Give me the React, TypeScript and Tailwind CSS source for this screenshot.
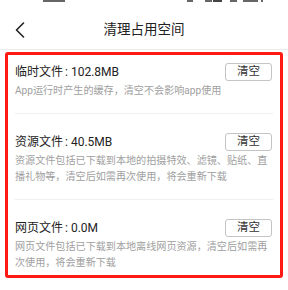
import React from "react";

const font = "font-['Roboto','Noto_Sans_CJK_SC',sans-serif]";

type Item = { name: string; size: string; desc: string };

const items: Item[] = [
  { name: "临时文件", size: "102.8MB", desc: "App运行时产生的缓存，清空不会影响app使用" },
  {
    name: "资源文件",
    size: "40.5MB",
    desc: "资源文件包括已下载到本地的拍摄特效、滤镜、贴纸、直播礼物等，清空后如需再次使用，将会重新下载",
  },
  {
    name: "网页文件",
    size: "0.0M",
    desc: "网页文件包括已下载到本地离线网页资源，清空后如需再次使用，将会重新下载",
  },
];

export default function App() {
  return (
    <div className={`w-[288px] h-[290px] bg-white overflow-hidden ${font}`}>
      {/* header */}
      <div className="h-[50px] border-b border-[#ececec]">
        <div className="h-[4px] flex items-start pl-[43px]">
          <span className="w-[22px] h-[2px] bg-[#666]" />
          <span className="ml-[122px] w-[6px] h-[2px] bg-[#666]" />
          <span className="ml-[12px] w-[7px] h-[2px] bg-[#666]" />
          <span className="ml-[1px] w-[9px] h-[2px] bg-[#444]" />
          <span className="ml-[8px] w-[7px] h-[2px] bg-[#666]" />
          <span className="ml-[6px] w-[15px] h-[2px] bg-[#666]" />
          <span className="ml-[3px] w-[2px] h-[2px] bg-[#666]" />
        </div>
        <div className="h-[45px] pt-[6px] px-[14px] grid grid-cols-[40px_1fr_40px] items-center">
          <svg
            width="12"
            height="16"
            viewBox="0 0 12 16"
            fill="none"
            stroke="#222"
            strokeWidth="1.6"
            strokeLinecap="round"
            strokeLinejoin="round"
          >
            <path d="M9.5 1 L2.5 8 L9.5 15" />
          </svg>
          <span className="text-center text-[13.5px] text-[#222] leading-none">清理占用空间</span>
          <span />
        </div>
      </div>

      {/* list */}
      <div className="mt-[2px] mx-[5px] h-[226px] border-[3px] border-[#ff1a14] rounded-[3px] pl-[7px] pr-[7px]">
        {items.map((it, i) => (
          <div
            key={i}
            className={`${i === 0 ? "pt-[8px]" : "pt-[19px]"} pb-[14px] ${
              i < items.length - 1 ? "border-b border-[#efefef]" : ""
            }`}
          >
            <div className="h-[18px] flex items-center justify-between pr-[1px]">
              <span className="text-[12px] text-[#222] leading-none flex items-center">
                {it.name}
                <span className="ml-[2px] mr-[3px]">:</span>
                {it.size}
              </span>
              <button className="w-[47px] h-[18px] border border-[#c4c4c4] rounded-[3px] text-[11.5px] text-[#333] leading-none flex items-center justify-center bg-white">
                清空
              </button>
            </div>
            <p className="mt-[2px] text-[10.1px] leading-[16px] text-[#a0a0a0]">{it.desc}</p>
          </div>
        ))}
      </div>
    </div>
  );
}
